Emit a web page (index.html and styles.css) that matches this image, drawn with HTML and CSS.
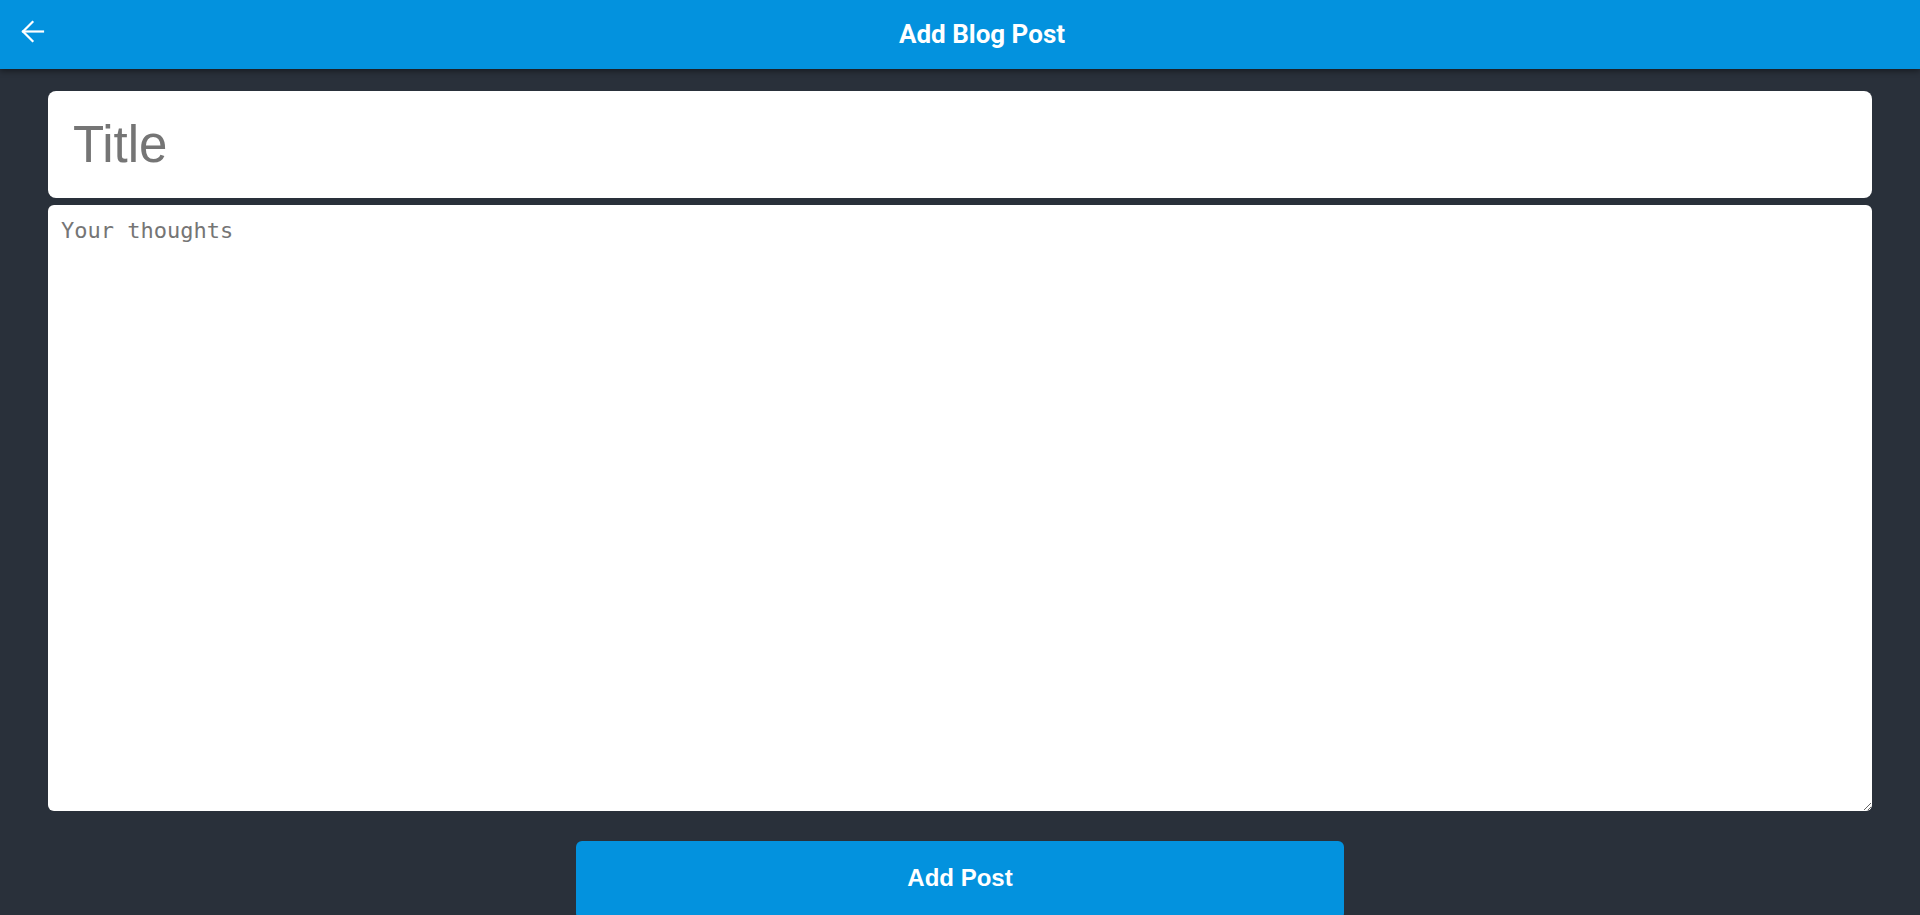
FILE: index.html
```html
<!DOCTYPE html>
<html lang="en">
<head>
<meta charset="utf-8">
<title>Add Blog Post</title>
<link rel="stylesheet" href="styles.css">
</head>
<body>
<header class="topbar">
  <button class="back" aria-label="Back">
    <svg width="26" height="26" viewBox="0 0 26 26" fill="none" stroke="#fff" stroke-width="2.2" stroke-linecap="square" stroke-linejoin="miter">
      <path d="M3 12.5H23"/>
      <path d="M12.5 3L3 12.5L12.5 22"/>
    </svg>
  </button>
  <h1 class="topbar-title">Add Blog Post</h1>
</header>
<main class="editor">
  <input class="title-input" type="text" placeholder="Title">
  <textarea class="body-input" placeholder="Your thoughts"></textarea>
  <div class="actions">
    <button class="submit">Add Post</button>
  </div>
</main>
</body>
</html>
```
FILE: styles.css
```css
* { box-sizing: border-box; }
html, body {
  margin: 0;
  padding: 0;
  height: 100%;
  overflow: hidden;
}
body {
  background: #29303a;
  font-family: "Liberation Sans", Arial, sans-serif;
}
.topbar {
  position: relative;
  height: 69px;
  background: #0392de;
  display: flex;
  align-items: center;
  justify-content: center;
  padding-left: 44px;
  box-shadow: 0 2px 6px rgba(0,0,0,0.45);
  z-index: 1;
}
.back {
  position: absolute;
  left: 20px;
  top: 19px;
  width: 26px;
  height: 26px;
  padding: 0;
  border: 0;
  background: transparent;
  display: flex;
}
.topbar-title {
  margin: 0;
  color: #fff;
  font-family: Roboto, "Noto Sans", sans-serif;
  font-weight: 700;
  font-size: 26px;
  line-height: 1;
  transform: translateY(-1px);
}
.editor {
  padding: 22px 48px 0;
  display: flex;
  flex-direction: column;
}
.title-input {
  height: 107px;
  border: 0;
  border-radius: 8px;
  background: #fff;
  padding: 0 25px;
  font-family: "Liberation Sans", Arial, sans-serif;
  font-size: 51px;
  color: #222;
  outline: none;
}
.title-input::placeholder { color: #757575; }
.body-input {
  margin-top: 7px;
  height: 606px;
  border: 0;
  border-radius: 6px;
  background: #fff;
  padding: 13px;
  font-family: "DejaVu Sans Mono", "Liberation Mono", monospace;
  font-size: 22px;
  color: #222;
  outline: none;
  resize: vertical;
}
.body-input::placeholder { color: #757575; }
.actions {
  display: flex;
  justify-content: center;
  margin-top: 30px;
}
.submit {
  width: 768px;
  height: 78px;
  border: 0;
  border-radius: 6px;
  background: #0392de;
  color: #fff;
  font-family: "Liberation Sans", Arial, sans-serif;
  font-weight: 700;
  font-size: 24px;
  padding: 0 0 4px;
}
```
